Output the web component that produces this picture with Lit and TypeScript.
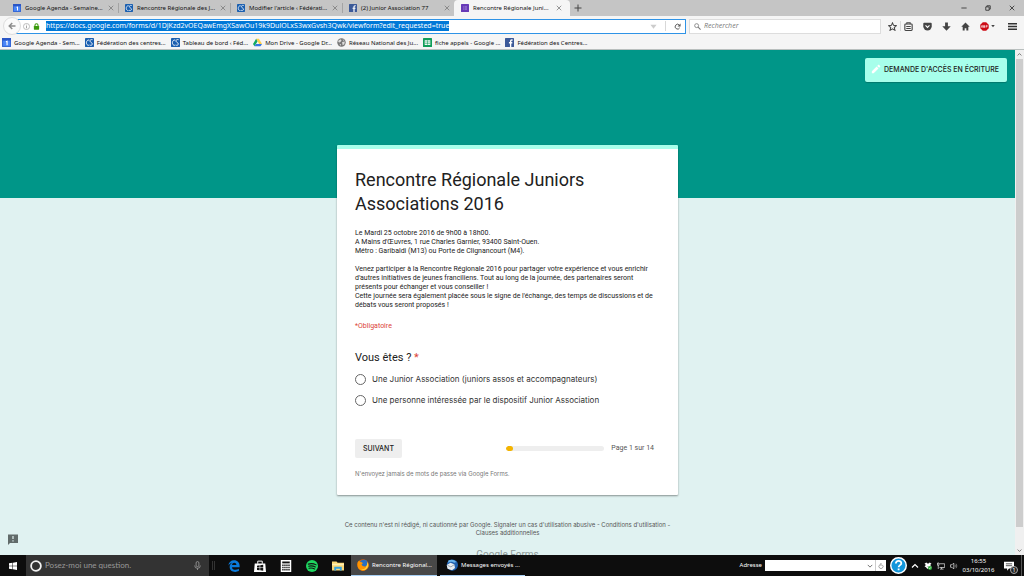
import { LitElement, html, css, svg, nothing, TemplateResult } from "lit";
import { customElement, property } from "lit/decorators.js";

const icons: Record<string, [string, TemplateResult]> = {
  calendar: ["0 0 16 16", svg`<rect width="16" height="16" rx="1" fill="#3367d6"/><rect width="16" height="4" fill="#2a56c6"/><path d="M2 5h12v9H2z" fill="#4a86f7"/><path d="M7 6.5l2-.8V13" stroke="#fff" stroke-width="2" fill="none"/>`],
  cs: ["0 0 16 16", svg`<rect width="16" height="16" rx="1.5" fill="#1a5fb0"/><path d="M7.5 3.5C4 3 2.500 6 2.500 8.500S4 13.500 7 13M13.500 3C9.500 2 8.500 4 9 6s4 2 4 4.500-2.500 3-5 2" stroke="#fff" stroke-width="1.500" fill="none"/>`],
  facebook: ["0 0 16 16", svg`<rect width="16" height="16" rx="1" fill="#3b5998"/><path d="M13.500 3.500h-1.500q-2 0-2 2V16M7 8.500h6" stroke="#fff" stroke-width="2.400" fill="none"/>`],
  forms: ["0 0 16 16", svg`<rect width="16" height="16" rx="1" fill="#673ab7"/><path d="M4 5.500h1.500M7 5.500h5M4 8h1.500M7 8h5M4 10.500h1.500M7 10.500h5" stroke="#b9a0e0" stroke-width="1.200"/>`],
  drive: ["0 0 16 16", svg`<path d="M5.500 1.500h5L16 10.500h-5z" fill="#ffcf48"/><path d="M5.500 1.500L8 6 2.600 14.500 0 10.500z" fill="#11a861"/><path d="M5.200 10.500H16l-2.600 4H2.600z" fill="#3777e3"/>`],
  globe: ["0 0 16 16", svg`<circle cx="8" cy="8" r="7.500" fill="#777"/><path d="M3 4l4-2 1 3-3 3-3-1zM9 7l5-1-1 5-3 2zM4 10l3 1v3zM10 2l3 2-2 1z" fill="#ddd"/>`],
  sheet: ["0 0 16 16", svg`<rect width="16" height="16" rx="1" fill="#0f9d58"/><path d="M3 4h10v8.500H3z" fill="#fff"/><path d="M3 7h10M3 10h10M8 4v8" stroke="#0f9d58"/>`],
  close: ["0 0 16 16", svg`<path d="M2 2l12 12M14 2L2 14" stroke="currentColor" stroke-width="2" fill="none"/>`],
  plus: ["0 0 16 16", svg`<path d="M8 1v14M1 8h14" stroke="currentColor" stroke-width="2" fill="none"/>`],
  min: ["0 0 16 16", svg`<path d="M1 8h14" stroke="currentColor" stroke-width="2"/>`],
  restore: ["0 0 16 16", svg`<path d="M2 5h9v9H2zM5 5V2h9v9h-3" stroke="currentColor" stroke-width="2" fill="none"/>`],
  back: ["0 0 16 16", svg`<path d="M15 8H3M8.500 2L2.500 8l6 6" stroke="#8c8c8c" stroke-width="3" fill="none"/>`],
  info: ["0 0 16 16", svg`<circle cx="8" cy="8" r="7" fill="none" stroke="#999" stroke-width="1.400"/><path d="M8 7v5M8 4v1.700" stroke="#888" stroke-width="1.800"/>`],
  lock: ["0 0 16 16", svg`<rect x="2" y="7" width="12" height="8.500" rx="1" fill="#3a9a0c"/><path d="M4.500 8V5a3.500 3.500 0 017 0v3" stroke="#3a9a0c" stroke-width="2.400" fill="none"/>`],
  down: ["0 0 16 16", svg`<path d="M1 4h14L8 13z" fill="currentColor"/>`],
  reload: ["0 0 16 16", svg`<path d="M12 4.500A5.500 5.500 0 1013 11" stroke="#555" stroke-width="2.200" fill="none"/><path d="M15 1v7H8z" fill="#555"/>`],
  search: ["0 0 16 16", svg`<circle cx="6" cy="6" r="4.500" fill="none" stroke="#777" stroke-width="1.800"/><path d="M9.500 9.500L15 15" stroke="#777" stroke-width="2.400"/>`],
  star: ["0 0 16 16", svg`<path d="M8 1.500l2 4.500 5 .5-3.800 3.300 1.200 5L8 12.200l-4.400 2.600 1.200-5L1 6.500 6 6z" fill="none" stroke="#444" stroke-width="1.800"/>`],
  clip: ["0 0 16 16", svg`<rect x="1.500" y="3.500" width="13" height="11.500" rx="1.500" fill="none" stroke="#444" stroke-width="2"/><path d="M5 4V1.500h6V4M4 8h8M4 11.500h8" stroke="#444" stroke-width="1.800" fill="none"/>`],
  pocket: ["0 0 16 16", svg`<path d="M2 1.500h12q1.500 0 1.500 1.500v4.500a7.500 7.500 0 01-15 0V3Q.5 1.500 2 1.500z" fill="#444"/><path d="M4.500 6L8 9.500 11.500 6" stroke="#fff" stroke-width="2" fill="none"/>`],
  arrow: ["0 0 16 16", svg`<path d="M5.500 1h5v6.500h5L8 15.500.5 7.500h5z" fill="#444"/>`],
  home: ["0 0 16 16", svg`<path d="M8 1l7.500 7.500H13V15H9.500v-4h-3v4H3V8.500H.5z" fill="#444"/>`],
  abp: ["0 0 16 16", svg`<path d="M5 .5h6L15.500 5v6L11 15.500H5L.5 11V5z" fill="#cc0a14"/><path d="M2 10l1.300-4h.8L5.300 10M2.700 9h2M6.500 5.900v4M6.500 6.100h1.700q1 .8 0 1.700H6.500h2q1 1 0 2h-2M11 10V6h1.700q1.600 1 0 2.200H11" stroke="#fff" stroke-width="1" fill="none"/>`],
  menu: ["0 0 16 16", svg`<path d="M0 3h16M0 8h16M0 13h16" stroke="#333" stroke-width="2.600"/>`],
  pencil: ["0 0 24 24", svg`<path d="M2 17.500V22h4.500L18 10.500 13.500 6zM22 6.500q.8-.8 0-1.500L19 2q-.8-.8-1.500 0l-2.600 2.600 4.500 4.500z" fill="#fff"/>`],
  up: ["0 0 16 16", svg`<path d="M2 11l6-6 6 6" stroke="currentColor" stroke-width="2.400" fill="none"/>`],
  chev: ["0 0 16 16", svg`<path d="M2 5l6 6 6-6" stroke="currentColor" stroke-width="2.400" fill="none"/>`],
  feedback: ["0 0 24 24", svg`<path d="M2 1h20v17H6l-4 4z" fill="#616b6a"/><path d="M12 4v6M12 12.500v2.500" stroke="#e0f2f1" stroke-width="2.400"/>`],
  windows: ["0 0 16 16", svg`<path d="M0 2.500l7-1v6H0zM8 1.300L16 0v7.500H8zM0 8.500h7v6l-7-1zM8 8.500h8V16l-8-1.300z" fill="#fff"/>`],
  ring: ["0 0 16 16", svg`<circle cx="8" cy="8" r="6.500" fill="none" stroke="#f2f2f2" stroke-width="2.400"/>`],
  mic: ["0 0 16 16", svg`<rect x="5.500" y="1" width="5" height="9" rx="2.500" fill="none" stroke="#aaa" stroke-width="1.300"/><path d="M3 8q0 5 5 5t5-5M8 13v3" stroke="#aaa" stroke-width="1.300" fill="none"/>`],
  edge: ["0 0 16 16", svg`<path d="M.5 7.300C1 2.800 4 .2 8 .2c5 0 7.700 3.600 7.500 7.800v1.500H5.300c.2 4 5.700 4.300 9.200 2.200v3.100C8.500 17.500 2.200 15 2.200 9.300c0-2.500 1.300-4.500 3.500-5.600C3.500 4 1.700 5.400.5 7.300zM5.400 6.500h5.800C11.200 2.800 5.700 2.900 5.400 6.500z" fill="#0a7bdc"/>`],
  store: ["0 0 16 16", svg`<path d="M1 4.500h14l1 11.500H0z" fill="#fff"/><path d="M5 5V1.500h6V5" stroke="#fff" stroke-width="1.300" fill="none"/><path d="M4 7.500l3.500-.5v3H4zM8.300 6.900l4-.6V10h-4zM4 10.700h3.500v3L4 13.200zM8.300 10.700h4v3.700l-4-.6z" fill="#111"/>`],
  calc: ["0 0 16 16", svg`<path d="M1 0h14v16H1z" fill="#fff"/><path d="M3 2h10v2.500H3z" fill="#111"/><path d="M3 7h10M3 10h10M3 13h10" stroke="#111" stroke-width="1.800" stroke-dasharray="1.800 .9"/>`],
  spotify: ["0 0 16 16", svg`<circle cx="8" cy="8" r="8" fill="#1ed760"/><path d="M3 5.500q5.500-1.700 10.500 1M3.500 8.300q4.500-1.300 9 1M4 11q4-1 7.500.9" stroke="#111" stroke-width="1.400" fill="none" stroke-linecap="round"/>`],
  folder: ["0 0 16 16", svg`<path d="M0 2h6l1.500 1.500H16V14H0z" fill="#fbd775"/><path d="M0 5h16v2H0z" fill="#fff0b5"/><path d="M3 14V9h10v5h-2.500v-2.500h-5V14z" fill="#35a4e0"/>`],
  firefox: ["0 0 16 16", svg`<circle cx="8" cy="8" r="7.700" fill="#e66000"/><circle cx="9" cy="6.300" r="5.300" fill="#2a6fc0"/><path d="M1 4l2-2 1 2q2-.5 4 1.500L6 7q1 3.500 5 3 3-.5 3-6 2.500 3.500 1 7-3 5-8 4.500Q-1 13.500 1 4z" fill="#ff9500"/><path d="M14 4q2 5-1 8.500T5 14q8 1 9-10z" fill="#ffd23e"/>`],
  thunder: ["0 0 16 16", svg`<circle cx="8.500" cy="8" r="7.500" fill="#1f5fae"/><path d="M3 2q6-3 11 2l-3 1Q7 2 3 5z" fill="#69b4ee"/><path d="M1 8l5-3 5 2 1 5-4 3-6-2z" fill="#e8edf2"/><path d="M2 8.500l4.500 2L11 7.500" stroke="#7e8b99" fill="none"/>`],
  go: ["0 0 16 16", svg`<path d="M4.500 5A5.500 5.500 0 1011.500 5M8 1v7M8 1L5 4.500" stroke="#666" stroke-width="1.600" fill="none"/>`],
  help: ["0 0 16 16", svg`<circle cx="8" cy="8" r="7.300" fill="#1296db" stroke="#fff" stroke-width="1.400"/><path d="M5.500 6.200q0-2.500 2.600-2.500t2.500 2.300c0 1.600-2.500 1.700-2.500 3.700M8.100 10.800v1.700" stroke="#fff" stroke-width="1.700" fill="none"/>`],
  dropbox: ["0 0 16 16", svg`<path d="M4.500 1L8 3.300l3.500-2.300L15 3.500 12 6l3 2.500-3.500 2.300L8 8.500l-3.500 2.300L1 8.500 4 6 1 3.500zM4 11.500l4-2.300 4 2.300L8 14z" fill="#fff"/><circle cx="12" cy="12" r="4" fill="#2faf3b"/><path d="M10 12l1.500 1.500L14 10.500" stroke="#fff" stroke-width="1.200" fill="none"/>`],
  network: ["0 0 16 16", svg`<path d="M5 3.500h10.300v7.500H5M9 11v3M6 14.200h7M1 2v4.500h3V2zM2.500 6.500V14" stroke="#eee" stroke-width="1.400" fill="none"/>`],
  volume: ["0 0 16 16", svg`<path d="M1 5.500h3L7.500 2v12L4 10.500H1z" stroke="#eee" stroke-width="1.300" fill="none"/><path d="M9.700 5.500q2 2.500 0 5M12 3.500q3.500 4.500 0 9" stroke="#bbb" stroke-width="1.200" fill="none"/>`],
  note: ["0 0 16 16", svg`<path d="M0 1h16v11H8l-3 3.500V12H0z" fill="#fff"/><path d="M3 4.500h10M3 7.500h10" stroke="#222" stroke-width="1.200"/>`],
};

@customElement("ui-icon")
class UiIcon extends LitElement {
  @property() name = "";
  static styles = css`
    :host { display: block; flex: none; width: 8px; height: 8px; }
    svg { display: block; width: 100%; height: 100%; }
  `;
  render() {
    const icon = icons[this.name];
    return icon ? html`<svg viewBox=${icon[0]} aria-hidden="true">${icon[1]}</svg>` : nothing;
  }
}

@customElement("browser-chrome")
class BrowserChrome extends LitElement {
  static styles = css`
    :host { display: block; flex: none; font: 6px/10px "Noto Sans", sans-serif; color: #111; background: #f5f5f5; border-bottom: 1px solid #b9bfbe; }
    button { border: 0; padding: 0; margin: 0; background: none; font: inherit; color: #444; display: flex; align-items: center; justify-content: center; }
    .tabs { display: flex; height: 16px; background: #c5c5c5; padding-left: 6px; align-items: center; }
    .tab { flex: 0 1 112px; min-width: 0; height: 16px; box-sizing: border-box; padding: 0 4px 0 7px; display: flex; align-items: center; gap: 4px; }
    .tab + .tab:not(.active) { background: linear-gradient(#a4a4a4, #a4a4a4) left center / 1px 10px no-repeat; }
    .tab.active { background: #f5f5f5; border-radius: 4px 4px 0 0; flex-basis: 116px; padding: 0 8px 0 7px; }
    .label { flex: 1; min-width: 0; white-space: nowrap; }
    .x ui-icon { width: 6px; height: 6px; color: #777; }
    .add { padding-left: 4px; }
    .win { margin-left: auto; display: flex; }
    .win button { width: 24px; height: 14px; }
    .win ui-icon { width: 6px; height: 6px; color: #222; }
    .nav { display: flex; height: 20px; align-items: center; padding: 0 7px 0 3px; font-size: 7px; }
    .back { width: 18px; height: 18px; border-radius: 50%; border: 1px solid #ddd; background: #fafafa; margin-right: -5px; z-index: 1; }
    .url { flex: 1; min-width: 0; height: 15px; box-sizing: border-box; border: 1px solid #2f93e6; background: #fff; display: flex; align-items: center; padding: 0 4px 0 6px; gap: 3px; }
    .url ui-icon { width: 7px; height: 7px; }
    .sep { width: 1px; height: 10px; background: #d8d8d8; }
    .url .sep { margin: 0 5px; }
    input { border: 0; padding: 0; margin: 0; font: inherit; outline: 0; background: none; min-width: 0; }
    .address { field-sizing: content; flex: 0 1 auto; height: 10px; margin-left: 3px; background: #0078d7; color: #fff; }
    .drop { margin-left: auto; color: #ccc; }
    .find { width: 192px; height: 15px; box-sizing: border-box; margin-left: 3px; background: #fff; border: 1px solid #ddd; display: flex; align-items: center; gap: 3px; padding: 0 4px; }
    .find input { flex: 1; font-style: italic; font-family: "Open Sans", sans-serif; }
    .find input::placeholder { color: #777; opacity: 1; }
    .find ui-icon { width: 7px; height: 7px; }
    .tools { display: flex; align-items: center; gap: 10px; margin-left: 7px; }
    .tools ui-icon { width: 9px; height: 9px; }
    .tools .pair { display: flex; align-items: center; gap: 3px; }
    .tools .ad { gap: 2px; }
    .tools .ad ui-icon:last-child { width: 4px; height: 4px; }
    .tools .more { padding-left: 3px; }
    .marks { display: flex; align-items: center; height: 13px; padding-left: 2px; gap: 5px; white-space: nowrap; }
    a { color: inherit; text-decoration: none; display: flex; align-items: center; gap: 3px; }
    .marks ui-icon { width: 9px; height: 9px; }
  `;
  private tabs = [
    ["calendar", "Google Agenda - Semaine..."],
    ["cs", "Rencontre Régionale des J..."],
    ["cs", "Modifier l'article ‹ Fédérati..."],
    ["facebook", "(2) Junior Association 77"],
    ["forms", "Rencontre Régionale Juni..."],
  ];
  private marks = [
    ["calendar", "Google Agenda - Sem..."],
    ["cs", "Fédération des centres..."],
    ["cs", "Tableau de bord ‹ Féd..."],
    ["drive", "Mon Drive - Google Dr..."],
    ["globe", "Réseau National des Ju..."],
    ["sheet", "fiche appels - Google ..."],
    ["facebook", "Fédération des Centres..."],
  ];
  render() {
    return html`
      <div class="tabs">
        ${this.tabs.map(([i, t], n) => html`<div class="tab ${n === 4 ? "active" : ""}"><ui-icon name=${i}></ui-icon><span class="label">${t}</span><button class="x" aria-label="Fermer l'onglet"><ui-icon name="close"></ui-icon></button></div>`)}
        <button class="add" aria-label="Nouvel onglet"><ui-icon name="plus"></ui-icon></button>
        <div class="win">
          <button aria-label="Réduire"><ui-icon name="min"></ui-icon></button>
          <button aria-label="Restaurer"><ui-icon name="restore"></ui-icon></button>
          <button aria-label="Fermer"><ui-icon name="close"></ui-icon></button>
        </div>
      </div>
      <div class="nav">
        <button class="back" aria-label="Précédent"><ui-icon name="back"></ui-icon></button>
        <div class="url">
          <ui-icon name="info"></ui-icon><ui-icon name="lock"></ui-icon>
          <input class="address" aria-label="Adresse du site" value="https://docs.google.com/forms/d/1DjKzd2vOEQawEmgXSawOu19k9DulOLxS3wxGvsh3Qwk/viewform?edit_requested=true" />
          <button class="drop" aria-label="Historique"><ui-icon name="down"></ui-icon></button>
          <span class="sep"></span>
          <button aria-label="Actualiser"><ui-icon name="reload"></ui-icon></button>
        </div>
        <div class="find"><ui-icon name="search"></ui-icon><input aria-label="Rechercher" placeholder="Rechercher" /></div>
        <div class="tools">
          <div class="pair"><button aria-label="Marquer"><ui-icon name="star"></ui-icon></button><span class="sep"></span><button aria-label="Marque-pages"><ui-icon name="clip"></ui-icon></button></div>
          <button aria-label="Pocket"><ui-icon name="pocket"></ui-icon></button>
          <button aria-label="Téléchargements"><ui-icon name="arrow"></ui-icon></button>
          <button aria-label="Accueil"><ui-icon name="home"></ui-icon></button>
          <button class="pair ad" aria-label="Adblock Plus"><ui-icon name="abp"></ui-icon><ui-icon name="down"></ui-icon></button>
          <button class="more" aria-label="Menu"><ui-icon name="menu"></ui-icon></button>
        </div>
      </div>
      <nav class="marks">${this.marks.map(([i, t]) => html`<a href="#"><ui-icon name=${i}></ui-icon>${t}</a>`)}</nav>
    `;
  }
}

@customElement("form-page")
class FormPage extends LitElement {
  static styles = css`
    :host { flex: 1; min-height: 0; display: flex; overflow: hidden; background: linear-gradient(#009688 148px, #e0f2f1 148px); font: 7px/9px Roboto, sans-serif; color: #212121; position: relative; }
    button { border: 0; margin: 0; font: inherit; color: inherit; }
    .content { flex: 1; min-width: 0; display: flex; flex-direction: column; align-items: center; padding-top: 8px; }
    .content > * { flex: none; }
    .request { align-self: flex-end; margin-right: 8px; height: 24px; padding: 0 8px 2px 6px; border-radius: 2px; background: #a7ffeb; display: flex; align-items: center; gap: 3px; font-family: Inter, sans-serif; font-weight: 500; box-shadow: 0 1px 1px #0003; white-space: nowrap; }
    .request ui-icon { width: 10px; height: 10px; }
    .card { width: 341px; max-width: 100%; box-sizing: border-box; margin-top: 63px; background: #fff; border-top: 4px solid #a7ffeb; padding: 19px 24px 17px 18px; box-shadow: 0 1px 2px #0006; border-radius: 1px; }
    h1 { font-size: 18px; line-height: 24px; font-weight: 400; margin: 0 0 13px; }
    p { margin: 0 0 9px; }
    .req { color: #db4437; }
    .obl { margin: 12px 0 20px; }
    fieldset { border: 0; padding: 0; margin: 0; }
    legend { padding: 0; font-size: 11px; line-height: 14px; margin-bottom: 8px; }
    label { display: flex; align-items: center; gap: 6px; font-family: Inter, sans-serif; font-size: 8px; line-height: 12px; margin-bottom: 9px; color: #333; }
    input[type="radio"] { appearance: none; margin: 0; width: 11px; height: 11px; box-sizing: border-box; border: 1px solid #666; border-radius: 50%; flex: none; }
    .row { display: flex; align-items: center; margin-top: 24px; }
    .next { width: 47px; height: 19px; padding: 0; border-radius: 2px; background: #eee; font-family: Inter, sans-serif; font-weight: 500; }
    .bar { margin-left: auto; width: 98px; height: 5px; border-radius: 3px; background: #eee; overflow: hidden; }
    .fill { height: 5px; border-radius: 3px; background: #f4b400; }
    .page { margin-left: 7px; color: #555; }
    .warn { margin: 11px 0 0; font-family: Inter, sans-serif; font-size: 6px; color: #777; }
    .legal { width: 341px; max-width: 100%; margin-top: 26px; font-family: Inter, sans-serif; font-size: 6px; line-height: 8px; text-align: center; color: #555; }
    a { color: inherit; text-decoration: none; }
    .brand { margin-top: 12px; font-size: 10px; line-height: 12px; color: #8d9998; }
    .feedback { position: absolute; left: 7px; bottom: 9px; background: none; padding: 0; }
    .feedback ui-icon { width: 12px; height: 12px; }
    .scroll { width: 9px; flex: none; background: #f0f0f0; display: flex; flex-direction: column; align-items: center; color: #555; }
    .scroll ui-icon { width: 5px; height: 5px; margin: 2px 0; }
    .thumb { width: 7px; height: 468px; background: #cdcdcd; }
    .scroll .end { margin-top: auto; }
  `;
  private options = [
    "Une Junior Association (juniors assos et accompagnateurs)",
    "Une personne intéressée par le dispositif Junior Association",
  ];
  private progress = 1 / 14;
  render() {
    return html`
      <div class="content">
        <button class="request"><ui-icon name="pencil"></ui-icon>DEMANDE D'ACCÈS EN ÉCRITURE</button>
        <form class="card">
          <h1>Rencontre Régionale Juniors Associations 2016</h1>
          <p>Le Mardi 25 octobre 2016 de 9h00 à 18h00.<br />A Mains d'Œuvres, 1 rue Charles Garnier, 93400 Saint-Ouen.<br />Métro : Garibaldi (M13) ou Porte de Clignancourt (M4).</p>
          <p>Venez participer à la Rencontre Régionale 2016 pour partager votre expérience et vous enrichir<br />d'autres initiatives de jeunes franciliens. Tout au long de la journée, des partenaires seront<br />présents pour échanger et vous conseiller !<br />Cette journée sera également placée sous le signe de l'échange, des temps de discussions et de<br />débats vous seront proposés !</p>
          <p class="req obl">*Obligatoire</p>
          <fieldset>
            <legend>Vous êtes ? <span class="req">*</span></legend>
            ${this.options.map((o) => html`<label><input type="radio" name="role" />${o}</label>`)}
          </fieldset>
          <div class="row">
            <button class="next" type="button">SUIVANT</button>
            <div class="bar"><div class="fill" style="width:${this.progress * 100}%"></div></div>
            <span class="page">Page 1 sur 14</span>
          </div>
          <p class="warn">N'envoyez jamais de mots de passe via Google Forms.</p>
        </form>
        <div class="legal">Ce contenu n'est ni rédigé, ni cautionné par Google. <a href="#">Signaler un cas d'utilisation abusive</a> - <a href="#">Conditions d'utilisation</a> -<br /><a href="#">Clauses additionnelles</a></div>
        <div class="brand">Google Forms</div>
      </div>
      <div class="scroll"><ui-icon name="up"></ui-icon><div class="thumb"></div><ui-icon class="end" name="chev"></ui-icon></div>
      <button class="feedback" aria-label="Signaler un problème"><ui-icon name="feedback"></ui-icon></button>
    `;
  }
}

@customElement("task-bar")
class TaskBar extends LitElement {
  static styles = css`
    :host { flex: none; height: 21px; display: flex; align-items: center; background: #0d0d0d; color: #fff; font: 6px/9px "Noto Sans", sans-serif; white-space: nowrap; }
    button { border: 0; padding: 0; margin: 0; background: none; font: inherit; color: inherit; display: flex; align-items: center; justify-content: center; height: 21px; flex: none; }
    .start { width: 26px; }
    .ask { width: 183px; height: 21px; box-sizing: border-box; background: #333; display: flex; align-items: center; gap: 3px; padding: 0 7px 0 4px; font-size: 8px; font-family: Lato, sans-serif; }
    .ask ui-icon { width: 12px; height: 12px; }
    .ask .mic { width: 9px; height: 9px; }
    input { min-width: 0; border: 0; padding: 0; margin: 0; background: none; font: inherit; outline: 0; }
    .ask input { flex: 1; }
    .ask input::placeholder { color: #999; opacity: 1; }
    .grip { width: 3px; height: 9px; box-sizing: border-box; border: solid #333; border-width: 0 1px; margin: 0 6px 0 3px; }
    .app { width: 26px; }
    .app ui-icon { width: 12px; height: 12px; }
    .task { box-sizing: border-box; height: 21px; border-bottom: 1px solid #a8d0f5; justify-content: flex-start; gap: 3px; padding: 0 5px 0 6px; margin-right: 3px; }
    .task.on { background: #484848; }
    .task ui-icon { width: 12px; height: 12px; }
    .right { margin-left: auto; display: flex; align-items: center; }
    .addr { display: flex; align-items: center; gap: 3px; }
    .box { width: 121px; height: 11px; background: #fff; color: #666; display: flex; align-items: center; }
    .box input { flex: 1; }
    .box button { height: 11px; width: 11px; border-left: 1px solid #ccc; }
    .box .pick { border: 0; }
    .box ui-icon { width: 6px; height: 6px; }
    .help { margin: 0 4px; }
    .help ui-icon { width: 17px; height: 17px; }
    .tray { display: flex; gap: 5px; }
    .tray ui-icon { width: 8px; height: 8px; }
    time { width: 41px; text-align: center; }
    .note { width: 20px; position: relative; }
    .note ui-icon { width: 10px; height: 10px; }
    .count { position: absolute; right: 1px; bottom: 2px; width: 8px; height: 8px; box-sizing: border-box; border: 1px solid #aaa; border-radius: 50%; background: #222; font-size: 6px; line-height: 6px; text-align: center; }
    .desk { width: 3px; height: 21px; border-left: 1px solid #555; margin-left: 2px; box-sizing: border-box; }
  `;
  render() {
    return html`
      <button class="start" aria-label="Démarrer"><ui-icon name="windows"></ui-icon></button>
      <div class="ask"><ui-icon name="ring"></ui-icon><input aria-label="Recherche" placeholder="Posez-moi une question." /><ui-icon class="mic" name="mic"></ui-icon></div>
      <span class="grip"></span>
      ${["edge", "store", "calc", "spotify", "folder"].map((n) => html`<button class="app" aria-label=${n}><ui-icon name=${n}></ui-icon></button>`)}
      <button class="task on"><ui-icon name="firefox"></ui-icon>Rencontre Régional...</button>
      <button class="task"><ui-icon name="thunder"></ui-icon>Messages envoyés ...</button>
      <div class="right">
        <div class="addr"><label for="addr">Adresse</label><div class="box"><input id="addr" /><button class="pick" aria-label="Liste"><ui-icon name="chev"></ui-icon></button><button aria-label="Aller"><ui-icon name="go"></ui-icon></button></div></div>
        <button class="help" aria-label="Aide"><ui-icon name="help"></ui-icon></button>
        <div class="tray"><ui-icon name="up"></ui-icon><ui-icon name="dropbox"></ui-icon><ui-icon name="network"></ui-icon><ui-icon name="volume"></ui-icon></div>
        <time>16:55<br />03/10/2016</time>
        <button class="note" aria-label="Notifications"><ui-icon name="note"></ui-icon><span class="count">1</span></button>
        <span class="desk"></span>
      </div>
    `;
  }
}

@customElement("app-root")
class AppRoot extends LitElement {
  static styles = css`
    :host { display: flex; flex-direction: column; height: 100vh; overflow: hidden; }
  `;
  render() {
    return html`<browser-chrome></browser-chrome><form-page></form-page><task-bar></task-bar>`;
  }
}
